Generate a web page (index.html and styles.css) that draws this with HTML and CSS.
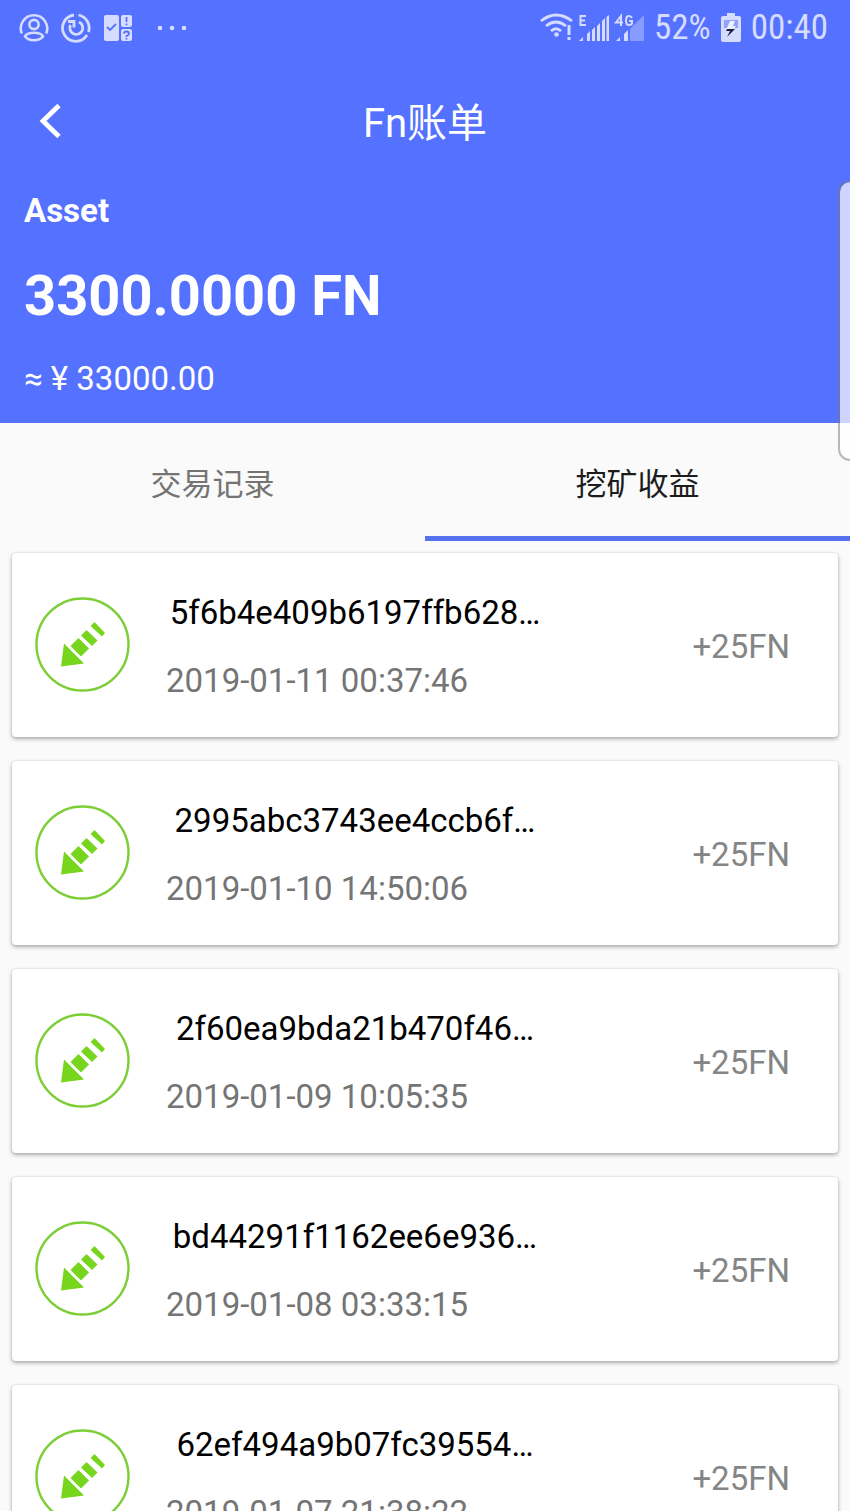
FILE: index.html
```html
<!DOCTYPE html>
<html lang="zh-CN">
<head>
<meta charset="utf-8">
<meta name="viewport" content="width=device-width, initial-scale=1">
<title>Fn账单</title>
<link rel="stylesheet" href="styles.css">
</head>
<body>
<svg class="defs" aria-hidden="true">
  <symbol id="incoming" viewBox="0 0 96 96">
    <circle cx="47.500" cy="47.500" r="46" fill="none" stroke="#7bcf35" stroke-width="2.400"/>
    <path fill="#77d51d" d="M29 46.500L26 69.500L49 66.500ZM35.500 49L43.500 41L54 51.500L46 59.500ZM46 38.500L51.500 33L62.500 43.500L57 49ZM55.500 29L59.500 25L70 36L67 39.500Z"/>
  </symbol>
</svg>
<div class="app">
  <header class="header">
    <div class="status">
      <div class="status-group notices">
        <svg width="30" height="30" viewBox="0 0 30 30" fill="none" stroke="currentColor" stroke-width="2.600">
          <path d="M2.800 20.500A13.200 13.200 0 1 1 27.200 20.500"/><circle cx="15" cy="11.500" r="4.600"/><path d="M6 23.500C8 18.500 22 18.500 24 23.500C20 28.500 10 28.500 6 23.500Z"/>
        </svg>
        <svg width="30" height="30" viewBox="0 0 30 30" fill="none" stroke="currentColor" stroke-width="2.800">
          <path d="M17.500 2A13.200 13.200 0 0 1 27.500 19M26 22A13.200 13.200 0 1 1 13 2"/><path d="M18 9A6.500 6.500 0 1 1 9.500 12"/><path d="M7 8.500H13V14.500"/>
        </svg>
        <svg width="30" height="30" viewBox="0 0 30 30">
          <path fill="currentColor" d="M3 2H14Q16 2 16 4V26Q16 28 14 28H3Q1 28 1 26V4Q1 2 3 2ZM20 2H27Q29 2 29 4V12Q29 14 27 14H20Q18 14 18 12V4Q18 2 20 2ZM20 16H27Q29 16 29 18V26Q29 28 27 28H20Q18 28 18 26V18Q18 16 20 16Z"/>
          <path fill="none" stroke="#5571ff" stroke-width="1.800" d="M4 14L7 17L13 11M23.500 4V9M23.500 10.500V12.300M21 20.500Q21 18.500 23.500 18.500Q26 18.500 26 20.500Q26 22 23.500 23V24M23.500 25V26.500"/>
        </svg>
        <svg class="more" width="30" height="30" viewBox="0 0 30 30" fill="currentColor"><circle cx="3" cy="15" r="2.300"/><circle cx="15" cy="15" r="2.300"/><circle cx="27" cy="15" r="2.300"/></svg>
      </div>
      <div class="status-group">
        <svg width="104" height="32" viewBox="0 0 104 32" fill="none" stroke="currentColor">
          <path stroke-width="2.800" d="M1 9Q16 -3 32 9M6 14Q16 6 26 14M11 19Q16 14.500 21 19"/>
          <circle cx="16.500" cy="22.500" r="2.300" fill="currentColor" stroke="none"/>
          <path stroke-width="3" d="M29 13V23M29 25V28"/>
          <path stroke-width="2" d="M46 4H40.500V13H46M40.500 8.500H45"/>
          <path fill="currentColor" stroke="none" d="M39 29L43 25V29ZM47 22L50 19V29H47ZM52 18L55 15V29H52ZM57 14L60 11V29H57ZM62 9L65 6V29H62ZM66.500 5L69 3V29H66.500ZM76 29L80 25V29ZM84 22L88 18V29H84Z"/>
          <path fill="currentColor" fill-opacity=".4" stroke="none" d="M90 17L104 3V29H90Z"/>
          <path stroke-width="2" d="M81 14V4L76 10.500H83M92 6Q91 4 89 4Q86 4 86 8.500Q86 13 89 13Q92 13 92 11V9H89"/>
        </svg>
        <span>52%</span>
        <svg width="20" height="32" viewBox="0 0 20 32">
          <path fill="currentColor" d="M6 1H14V4H18Q20 4 20 6V28Q20 30 18 30H2Q0 30 0 28V6Q0 4 2 4H6Z"/>
          <path fill="#8fa1fb" d="M3 8H17V16H3Z"/><path fill="#eef0ff" d="M9 9H14L12 14H15L12 18H5Z"/><path fill="#17203c" d="M6 17H14L6 25L9 19H5Z"/>
        </svg>
        <time>00:40</time>
      </div>
    </div>
    <nav class="bar">
      <button class="back" type="button" aria-label="返回">
        <svg width="22" height="34" viewBox="0 0 22 34" fill="none" stroke="currentColor" stroke-width="4.800"><path d="M20 1.500L4 17L20 32.500"/></svg>
      </button>
      <h1 class="title">Fn账单</h1>
    </nav>
    <section class="asset">
      <h2 class="asset-label">Asset</h2>
      <p class="asset-amount">3300.0000 FN</p>
      <p class="asset-value">≈ ¥ 33000.00</p>
    </section>
  </header>
  <div class="tabs" role="tablist">
    <button class="tab" type="button" role="tab" aria-selected="false">交易记录</button>
    <button class="tab" type="button" role="tab" aria-selected="true">挖矿收益</button>
  </div>
  <main class="list">
    <article class="card">
      <svg class="icon"><use href="#incoming"/></svg>
      <div class="info"><p class="hash">5f6b4e409b6197ffb628…</p><time class="date">2019-01-11 00:37:46</time></div>
      <span class="reward">+25FN</span>
    </article>
    <article class="card">
      <svg class="icon"><use href="#incoming"/></svg>
      <div class="info"><p class="hash">2995abc3743ee4ccb6f…</p><time class="date">2019-01-10 14:50:06</time></div>
      <span class="reward">+25FN</span>
    </article>
    <article class="card">
      <svg class="icon"><use href="#incoming"/></svg>
      <div class="info"><p class="hash">2f60ea9bda21b470f46…</p><time class="date">2019-01-09 10:05:35</time></div>
      <span class="reward">+25FN</span>
    </article>
    <article class="card">
      <svg class="icon"><use href="#incoming"/></svg>
      <div class="info"><p class="hash">bd44291f1162ee6e936…</p><time class="date">2019-01-08 03:33:15</time></div>
      <span class="reward">+25FN</span>
    </article>
    <article class="card">
      <svg class="icon"><use href="#incoming"/></svg>
      <div class="info"><p class="hash">62ef494a9b07fc39554…</p><time class="date">2019-01-07 21:38:22</time></div>
      <span class="reward">+25FN</span>
    </article>
  </main>
  <div class="edge-handle"></div>
</div>
</body>
</html>
```
FILE: styles.css
```css
* { box-sizing: border-box; }
body, h1, h2, p { margin: 0; }
body {
  background: #fafafa;
  font-family: Roboto, "Noto Sans CJK SC", sans-serif;
  font-size: 33px;
  line-height: 40px;
}
button {
  border: 0;
  padding: 0;
  background: none;
  font: inherit;
  color: inherit;
}
.defs { position: absolute; width: 0; height: 0; }
.app {
  position: relative;
  display: flex;
  flex-direction: column;
  height: 100vh;
  overflow: hidden;
}
.header { background: #5571ff; color: #fff; }
.status {
  display: flex;
  align-items: center;
  justify-content: space-between;
  height: 56px;
  padding: 0 22px 0 19px;
  color: #d5dcff;
  font-family: "Roboto Condensed", Roboto, sans-serif;
  font-size: 35px;
}
.status-group { display: flex; align-items: center; gap: 10px; }
.notices { gap: 12px; }
.more { margin-left: 12px; }
.bar {
  display: grid;
  grid-template-columns: 80px 1fr 80px;
  align-items: center;
  height: 130px;
}
.back { display: flex; justify-content: center; padding: 0 0 0 20px; }
.title {
  padding-top: 6px;
  font-size: 40px;
  font-weight: 400;
  line-height: 48px;
  text-align: center;
}
.asset { padding: 5px 24px 24px; }
.asset-label { font-size: 33px; line-height: 40px; font-weight: 700; }
.asset-amount {
  margin: 33px 0 31px;
  font-size: 56px;
  line-height: 64px;
  font-weight: 700;
}
.tabs {
  display: grid;
  grid-template-columns: 1fr 1fr;
  flex: none;
  height: 118px;
}
.tab {
  padding-top: 10px;
  border-bottom: 5px solid transparent;
  font-size: 31px;
  color: #747474;
}
.tab[aria-selected="true"] { border-bottom-color: #5571ee; color: #1c1c1c; }
.list {
  display: flex;
  flex-direction: column;
  gap: 24px;
  flex: 1;
  min-height: 0;
  padding: 12px;
  overflow: hidden;
}
.card {
  display: flex;
  align-items: center;
  flex: none;
  min-height: 184px;
  padding: 0 48px 0 23px;
  border-radius: 4px;
  background: #fff;
  box-shadow: 0 2px 4px rgba(0, 0, 0, .32), 0 0 2px rgba(0, 0, 0, .12);
}
.icon { flex: none; width: 96px; height: 96px; }
.info {
  display: flex;
  flex-direction: column;
  gap: 28px;
  width: 378px;
  margin-left: 35px;
  padding-top: 4px;
}
.hash { color: #000; text-align: center; white-space: nowrap; }
.date { color: #757575; }
.reward { margin-left: auto; padding-top: 4px; color: #858585; }
.edge-handle {
  position: absolute;
  top: 180px;
  right: -12px;
  width: 24px;
  height: 281px;
  border: 2px solid rgba(120, 120, 120, .5);
  border-radius: 14px;
  background: rgba(255, 255, 255, .7);
  background-clip: padding-box;
}
```
